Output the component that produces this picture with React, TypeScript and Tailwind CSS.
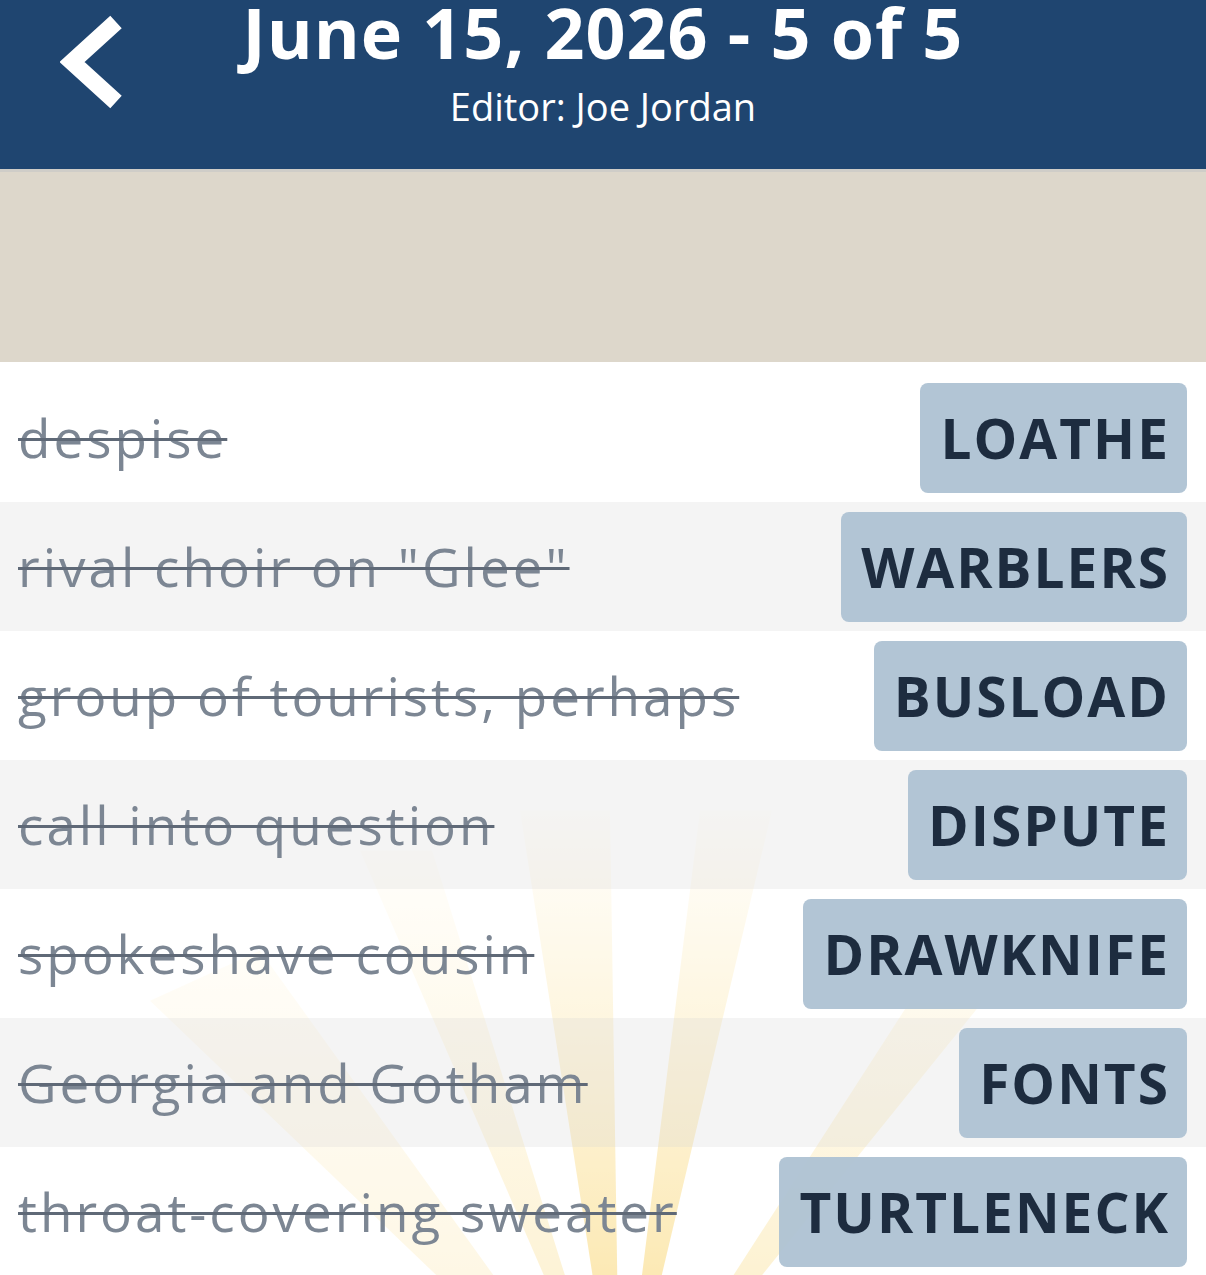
import React from 'react';

interface Clue {
  id: number;
  clue: string;
  answer: string;
}

const clues: Clue[] = [
  { id: 1, clue: 'despise', answer: 'LOATHE' },
  { id: 2, clue: 'rival choir on "Glee"', answer: 'WARBLERS' },
  { id: 3, clue: 'group of tourists, perhaps', answer: 'BUSLOAD' },
  { id: 4, clue: 'call into question', answer: 'DISPUTE' },
  { id: 5, clue: 'spokeshave cousin', answer: 'DRAWKNIFE' },
  { id: 6, clue: 'Georgia and Gotham', answer: 'FONTS' },
  { id: 7, clue: 'throat-covering sweater', answer: 'TURTLENECK' },
];

// faded sunburst behind the solved list (page coords in viewBox)
const SunRays = () => (
  <svg className="absolute inset-0 h-full w-full" viewBox="0 362 1206 913" preserveAspectRatio="none">
    <defs>
      <linearGradient id="ray" gradientUnits="userSpaceOnUse" x1="0" y1="790" x2="0" y2="1275">
        <stop offset="0" stopColor="#f8d468" stopOpacity="0" />
        <stop offset="1" stopColor="#f7c845" stopOpacity="1" />
      </linearGradient>
    </defs>
    <g fill="url(#ray)">
      <polygon points="620,1450 360,850 432,850" opacity="0.55" />
      <polygon points="620,1450 520,810 610,810" />
      <polygon points="620,1450 700,810 772,810" />
      <polygon points="620,1450 975,900 1040,930" opacity="0.6" />
      <polygon points="620,1450 150,1000 260,950" opacity="0.35" />
    </g>
  </svg>
);

const ClueRow: React.FC<{ item: Clue; shaded: boolean }> = ({ item, shaded }) => (
  <div
    className={`flex h-[129px] items-center justify-between pl-[18px] pr-[19px] ${
      shaded ? 'bg-[#f0f0f0]/70' : 'bg-white/60'
    }`}
  >
    <span className="text-[53px] leading-none tracking-[3px] text-[#7c8693] line-through decoration-[#5f6977] decoration-[3px]">
      {item.clue}
    </span>
    <span className="flex h-[110px] items-center rounded-lg bg-[#aec2d3]/95 pl-5 pr-[17px] text-[55px] font-bold leading-none tracking-[2px] text-[#1d2c3f]">
      {item.answer}
    </span>
  </div>
);

export default function App() {
  return (
    <div className="min-h-[1275px] w-[1206px] overflow-hidden bg-white" style={{ fontFamily: '"Open Sans", "Noto Sans", sans-serif' }}>
      <header className="relative h-[169px] bg-[#1f4570] text-white">
        <button className="absolute left-[60px] top-[14px] h-[96px] w-[70px]">
          <svg viewBox="0 0 70 96" className="h-full w-full">
            <polyline points="56,8 12,48 56,88" fill="none" stroke="#ffffff" strokeWidth="17" />
          </svg>
        </button>
        <div className="flex flex-col items-center">
          <h1 className="text-[70px] font-bold leading-[65px] tracking-[1px]">
            June 15, 2026 - 5 of 5
          </h1>
          <p className="mt-[21px] text-[38px] leading-[40px]">
            Editor: Joe Jordan
          </p>
        </div>
      </header>
      <div className="h-[3px] bg-[#cfcdc8]" />
      <div className="h-[190px] bg-[#ddd7cb]" />
      <main className="relative pt-[11px]">
        <SunRays />
        <div className="relative">
          {clues.map((c, i) => (
            <ClueRow key={c.id} item={c} shaded={i % 2 === 1} />
          ))}
        </div>
      </main>
    </div>
  );
}
